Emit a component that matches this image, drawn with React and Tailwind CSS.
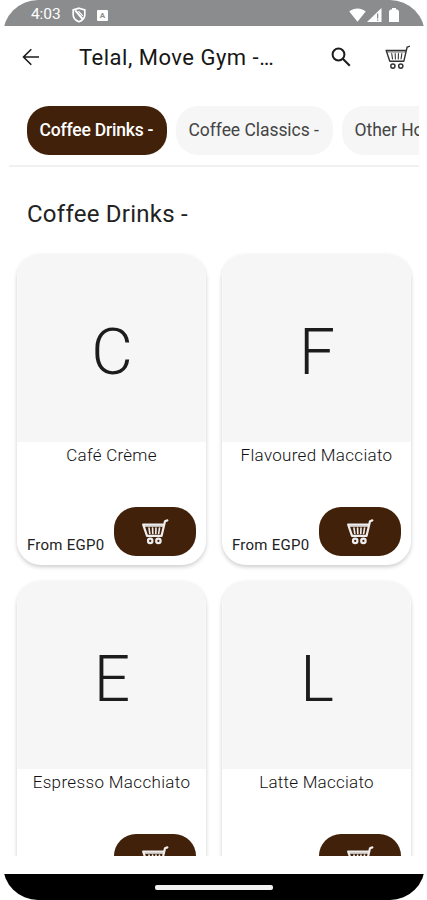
import React, { useState } from "react";

const categories = [
  { name: "Coffee Drinks -", width: "w-[140px]" },
  { name: "Coffee Classics -", width: "w-[157px]" },
  { name: "Other Hot Drinks -", width: "w-[164px]" },
];

const products = [
  { name: "Café Crème", price: "From EGP0", tracking: "tracking-[0.28px]" },
  { name: "Flavoured Macciato", price: "From EGP0", tracking: "tracking-[0.3px]" },
  { name: "Espresso Macchiato", price: "From EGP0", tracking: "tracking-[0.35px]" },
  { name: "Latte Macciato", price: "From EGP0", tracking: "tracking-[0.25px]" },
];

function CartIcon({ className, strokeWidth = 1.6 }) {
  return (
    <svg
      viewBox="0 0 28 26"
      className={className}
      fill="none"
      stroke="currentColor"
      strokeWidth={strokeWidth}
      strokeLinecap="round"
      strokeLinejoin="round"
    >
      <path d="M26.3 1.4 24 2.2 20.6 16.8H6L2.2 5.6h20.6" />
      <path d="M3.3 7.2h19" strokeWidth={strokeWidth * 0.6} />
      <path d="M8 9l.8 5.5M11.6 9l.2 5.5M15 9l-.2 5.5M18.5 9l-.8 5.5" strokeWidth={strokeWidth * 0.75} />
      <circle cx="9.2" cy="21.9" r="2.2" />
      <circle cx="17.4" cy="21.9" r="2.2" />
    </svg>
  );
}

function StatusBar() {
  return (
    <div className="h-[26px] shrink-0 bg-[#8b8c8d] flex items-center text-white pl-[28px] pr-[26px] pt-[4px]">
      <span className="text-[15.5px] leading-none w-[32px] whitespace-nowrap tracking-[-0.1px]">4:03</span>
      <svg viewBox="0 0 14 16" className="w-[14px] h-[16px] ml-[9px]" fill="none" stroke="currentColor" strokeWidth="1.7">
        <path d="M7 1.2 12.8 3v5c0 3-2.2 5.4-5.8 6.8C3.4 13.4 1.2 11 1.2 8V3z" />
        <path d="M3.2 3.4 10.6 12" strokeWidth="2" />
        <path d="M6.4 4.2l4.3 4.6" strokeWidth="1.2" />
      </svg>
      <span className="ml-[11px] w-[11px] h-[11px] rounded-[1px] bg-white text-[#8b8c8d] text-[8px] leading-[11px] font-bold text-center">
        A
      </span>
      <svg viewBox="0 0 17 14" className="w-[17px] h-[14px] ml-auto" fill="currentColor">
        <path d="M8.5 13.8.3 3.6C5-.7 12-.7 16.7 3.6z" />
      </svg>
      <svg viewBox="0 0 15 14" className="w-[15px] h-[14px] ml-[1px]" fill="currentColor">
        <path d="M14.5 0v14H0z" />
        <path d="M10 5.5h1.3v5H10zM10 11.5h1.3v1.3H10z" fill="#8b8c8d" />
      </svg>
      <svg viewBox="0 0 10 14" className="w-[10px] h-[14px] ml-[7px]" fill="currentColor">
        <path d="M3 0h4v1.5h1.5L10 3v11H0V3l1.5-1.5H3z" />
      </svg>
    </div>
  );
}

function Header() {
  return (
    <header className="h-[80px] shrink-0 flex items-center pl-[19px] pr-[14px] pb-[18px]">
      <svg viewBox="0 0 18 18" className="w-[18px] h-[18px] text-[#1c1c1c]" fill="none" stroke="currentColor" strokeWidth="1.6">
        <path d="M17 9H2M9.3 1.2 1.5 9l7.8 7.8" />
      </svg>
      <h1 className="ml-[39px] mt-[2px] w-[200px] whitespace-nowrap text-[22px] leading-none tracking-[0.5px] text-[#161616]">
        Telal, Move Gym -<span className="tracking-[-1.2px]">...</span>
      </h1>
      <svg viewBox="0 0 20 20" className="w-[20px] h-[20px] ml-[52px] text-[#1c1c1c] -mt-[1px]" fill="none" stroke="currentColor" strokeWidth="2">
        <circle cx="7.5" cy="7.5" r="5.9" />
        <path d="M11.8 11.8 18.8 18.8" />
      </svg>
      <CartIcon className="w-[27px] h-[25px] ml-auto text-[#333]" strokeWidth={1.5} />
    </header>
  );
}

function ProductCard({ product }) {
  return (
    <div className="h-[311px] rounded-[24px] overflow-hidden bg-white shadow-[0_2px_4px_rgba(0,0,0,0.2)] flex flex-col">
      <div className="h-[188px] shrink-0 bg-[#f6f6f6] flex items-center justify-center border-x border-[#f9f9f9]">
        <span className="text-[64px] leading-none font-light text-[#1c1c1c] mt-[10px] pl-px">{product.name[0]}</span>
      </div>
      <h3 className={`mt-[3px] text-center text-[17px] leading-5 font-light text-[#111] whitespace-nowrap ${product.tracking}`}>
        {product.name}
      </h3>
      <div className="mt-auto pb-[9px] px-[10px] flex items-end justify-between">
        <span className="text-[15px] leading-5 tracking-[0.25px] text-[#222] whitespace-nowrap pb-px">{product.price}</span>
        <button className="w-[82px] h-[49px] rounded-[22px] bg-[#42210b] text-[#eee] flex items-center justify-center shrink-0">
          <CartIcon className="w-[28px] h-[26px]" strokeWidth={2.2} />
        </button>
      </div>
    </div>
  );
}

function App() {
  const [active, setActive] = useState(0);

  return (
    <div className="bg-white w-[427px] h-[900px] pl-[3px] pr-[2px] font-[Roboto,sans-serif]">
      <div className="h-full rounded-[35px] overflow-hidden bg-white flex flex-col">
        <StatusBar />
        <Header />

        {/* categories */}
        <nav className="h-[61px] shrink-0 mx-[6px] pl-[18px] border-b-2 border-[#f0f0f0] flex items-start gap-[9px] overflow-hidden">
          {categories.map((category, index) => (
            <button
              key={category.name}
              onClick={() => setActive(index)}
              className={`h-[49px] shrink-0 rounded-[22px] pl-[12.5px] text-left text-[17.5px] whitespace-nowrap ${category.width} ${
                active === index
                  ? "bg-[#42210b] text-white font-medium tracking-[-0.2px]"
                  : "bg-[#f6f6f6] text-[#444] tracking-[-0.05px]"
              }`}
            >
              {category.name}
            </button>
          ))}
        </nav>

        {/* products */}
        <main className="h-[689px] shrink-0 overflow-hidden">
          <h2 className="pl-[24px] pt-[33px] text-[24px] leading-7 tracking-[0.25px] text-[#222]">
            Coffee Drinks -
          </h2>
          <div className="mt-[26px] px-[14px] grid grid-cols-2 gap-[16px]">
            {products.map((product) => (
              <ProductCard key={product.name} product={product} />
            ))}
          </div>
        </main>

        {/* gesture bar */}
        <div className="mt-auto h-[26px] shrink-0 bg-black flex justify-center items-center">
          <span className="w-[118px] h-[5px] rounded-[2px] bg-[#f2f2f2]" />
        </div>
      </div>
    </div>
  );
}

export default App;
